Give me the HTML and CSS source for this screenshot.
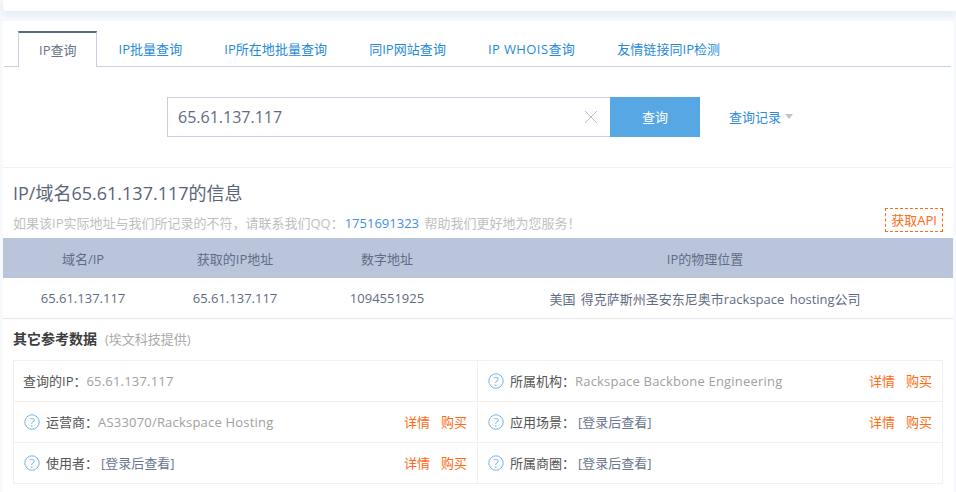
FILE: index.html
```html
<!DOCTYPE html>
<html lang="zh-CN">
<head>
    <meta charset="UTF-8">
    <title>IP查询</title>
    <link rel="stylesheet" href="styles.css">
</head>
<body>
    <div class="top-bar"></div>

    <div class="panel">
        <!-- Tabs -->
        <ul class="tabs">
            <li class="tab active">IP查询</li>
            <li class="tab">IP批量查询</li>
            <li class="tab">IP所在地批量查询</li>
            <li class="tab">同IP网站查询</li>
            <li class="tab tab-whois">IP WHOIS查询</li>
            <li class="tab">友情链接同IP检测</li>
        </ul>

        <!-- Search -->
        <div class="search">
            <div class="search-input">
                <span class="search-value">65.61.137.117</span>
                <svg class="clear-icon" width="14" height="14" viewBox="0 0 14 14"><path d="M1 1L13 13M13 1L1 13" stroke="#bdbdbd" stroke-width="1" fill="none"/></svg>
            </div>
            <div class="search-btn">查询</div>
            <div class="history">查询记录<span class="caret"></span></div>
        </div>

        <!-- Info -->
        <div class="info">
            <h1 class="info-title">IP/域名65.61.137.117的信息</h1>
            <div class="notice-row">
                <p class="notice">如果该IP实际地址与我们所记录的不符，请联系我们QQ：<span class="qq">1751691323</span> 帮助我们更好地为您服务！</p>
                <span class="api-btn">获取API</span>
            </div>
        </div>

        <div class="result-row result-head">
            <div>域名/IP</div>
            <div>获取的IP地址</div>
            <div>数字地址</div>
            <div>IP的物理位置</div>
        </div>
        <div class="result-row result-body">
            <div>65.61.137.117</div>
            <div>65.61.137.117</div>
            <div>1094551925</div>
            <div class="result-place">美国 得克萨斯州圣安东尼奥市rackspace hosting公司</div>
        </div>

        <!-- Other data -->
        <h2 class="other-title">其它参考数据<span class="other-source">(埃文科技提供)</span></h2>
        <div class="other-grid">
            <div class="cell">
                <span class="label">查询的IP：</span><span class="value">65.61.137.117</span>
            </div>
            <div class="cell cell-right">
                <svg class="help" viewBox="0 0 16 16"><circle cx="8" cy="8" r="7.2"/><text x="8" y="12.5">?</text></svg>
                <span class="label">所属机构：</span><span class="value">Rackspace Backbone Engineering</span>
                <span class="actions"><a>详情</a><a>购买</a></span>
            </div>
            <div class="cell">
                <svg class="help" viewBox="0 0 16 16"><circle cx="8" cy="8" r="7.2"/><text x="8" y="12.5">?</text></svg>
                <span class="label">运营商：</span><span class="value">AS33070/Rackspace Hosting</span>
                <span class="actions"><a>详情</a><a>购买</a></span>
            </div>
            <div class="cell cell-right">
                <svg class="help" viewBox="0 0 16 16"><circle cx="8" cy="8" r="7.2"/><text x="8" y="12.5">?</text></svg>
                <span class="label">应用场景：</span><span class="locked">[登录后查看]</span>
                <span class="actions"><a>详情</a><a>购买</a></span>
            </div>
            <div class="cell">
                <svg class="help" viewBox="0 0 16 16"><circle cx="8" cy="8" r="7.2"/><text x="8" y="12.5">?</text></svg>
                <span class="label">使用者：</span><span class="locked">[登录后查看]</span>
                <span class="actions"><a>详情</a><a>购买</a></span>
            </div>
            <div class="cell cell-right">
                <svg class="help" viewBox="0 0 16 16"><circle cx="8" cy="8" r="7.2"/><text x="8" y="12.5">?</text></svg>
                <span class="label">所属商圈：</span><span class="locked">[登录后查看]</span>
            </div>
        </div>
    </div>
</body>
</html>
```

FILE: styles.css
```css
* {
    box-sizing: border-box;
}
html, body {
    height: 492px;
    overflow: hidden;
}
body {
    margin: 0;
    padding: 0 3px;
    background-color: #f7f9fc;
    color: #5f6b85;
    font-family: "Open Sans", "Noto Sans CJK SC", sans-serif;
    font-size: 13px;
}
.top-bar {
    height: 11px;
    margin: 0 -3px 10px 0;
    background: #fff;
    border-radius: 0 0 0 4px;
    box-shadow: 0 2px 10px rgba(170, 195, 225, 0.35);
}
.panel {
    position: relative;
    background: #fff;
    height: 471px;
}
.tabs {
    display: flex;
    list-style: none;
    margin: 0 2px 0 1px;
    padding: 10px 0 0 14px;
    height: 46px;
    border-bottom: 1px solid #c8cfe0;
}
.tab {
    padding: 0 21px;
    height: 36px;
    line-height: 37px;
    letter-spacing: 0.05px;
    color: #1f8ad8;
    white-space: nowrap;
}
.tab.active {
    height: 36px;
    padding: 0 20px;
    letter-spacing: 0;
    color: #6a7287;
    background: #fff;
    border: 1px solid #c8cfe0;
    border-top: 2px solid #57688a;
    border-bottom: none;
    line-height: 35px;
}
.tab-whois {
    letter-spacing: 0.4px;
}
.search {
    display: flex;
    align-items: center;
    height: 40px;
    margin: 30px 0 0 164px;
}
.search-input {
    display: flex;
    align-items: center;
    justify-content: space-between;
    width: 443px;
    height: 40px;
    padding: 0 12px 0 10px;
    border: 1px solid #c8cfe0;
    border-right: none;
}
.search-value {
    font-size: 16px;
    color: #5f6b85;
}
.search-btn {
    width: 90px;
    height: 40px;
    line-height: 41px;
    text-align: center;
    color: #fff;
    background-color: #56a7e4;
}
.history {
    display: flex;
    align-items: center;
    margin-left: 29px;
    padding-bottom: 2px;
    color: #2f8be0;
}
.caret {
    margin: 1px 0 0 4px;
    border-top: 5px solid #c4c4c4;
    border-left: 4px solid transparent;
    border-right: 4px solid transparent;
}
.info {
    margin-top: 30px;
    padding: 13px 10px 0;
    border-top: 1px solid #f0f0f0;
    height: 71px;
}
.info-title {
    margin: 0;
    font-size: 18px;
    font-weight: normal;
    line-height: 25px;
    color: #5a6478;
}
.notice-row {
    display: flex;
    justify-content: space-between;
    align-items: flex-start;
    margin-top: 2px;
}
.notice {
    margin: 6px 0 0;
    line-height: 18px;
    color: #c0c0c0;
}
.qq {
    margin: 0 2px 0 1px;
    color: #3f8ee8;
}
.api-btn {
    width: 58px;
    height: 24px;
    line-height: 22px;
    text-align: center;
    color: #ff6a13;
    border: 1px dashed #ff6a13;
}
.result-row {
    display: grid;
    grid-template-columns: 152px 152px 152px 1fr;
    padding: 0 6px 0 4px;
    height: 40px;
    align-items: center;
    text-align: center;
}
.result-head {
    background-color: #bac5dc;
    color: #626c85;
}
.result-body {
    height: 41px;
    border-bottom: 1px solid #e8e8e8;
}
.result-place {
    word-spacing: 2px;
}
.other-title {
    margin: 10px 0 11px 10px;
    height: 20px;
    line-height: 20px;
    font-size: 14px;
    font-weight: bold;
    color: #3c3c3c;
}
.other-source {
    margin-left: 8px;
    font-size: 13px;
    font-weight: normal;
    color: #aaa;
}
.other-grid {
    display: grid;
    grid-template-columns: 463px 466px;
    margin-left: 10px;
    width: 930px;
    border: 1px solid #f0f0f0;
    border-bottom: none;
}
.cell {
    display: flex;
    align-items: center;
    height: 41px;
    padding: 0 10px 2px 9px;
    border-bottom: 1px solid #f0f0f0;
}
.cell-right {
    padding-right: 11px;
    border-left: 1px solid #f0f0f0;
}
.help {
    flex: none;
    width: 16px;
    height: 16px;
    margin: 2px 6px 0 1px;
}
.help circle {
    fill: none;
    stroke: #72b5e8;
    stroke-width: 1;
}
.help text {
    fill: #8fc2ea;
    font-size: 13px;
    text-anchor: middle;
}
.label {
    color: #555;
}
.value {
    margin-top: 2px;
    letter-spacing: 0.2px;
    color: #a0a0a0;
}
.locked {
    margin-left: 3px;
    color: #6a7590;
}
.actions {
    display: flex;
    gap: 11px;
    margin-left: auto;
    color: #ff6a13;
}
```
